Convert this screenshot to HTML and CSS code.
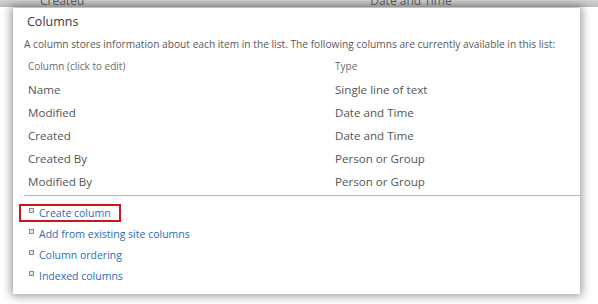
FILE: index.html
```html
<!DOCTYPE html>
<html lang="en">
<head>
    <meta charset="UTF-8">
    <title>Columns</title>
    <link rel="stylesheet" href="styles.css">
</head>
<body>
    <div class="backdrop">
        <span class="under-name">Created</span>
        <span class="under-type">Date and Time</span>
    </div>

    <div class="dialog">
        <h2 class="title">Columns</h2>
        <p class="desc">A column stores information about each item in the list. The following columns are currently available in this list:</p>

        <div class="columns">
            <div class="head">Column (click to edit)</div>
            <div class="head">Type</div>

            <div class="cell">Name</div>
            <div class="cell">Single line of text</div>

            <div class="cell">Modified</div>
            <div class="cell">Date and Time</div>

            <div class="cell">Created</div>
            <div class="cell">Date and Time</div>

            <div class="cell">Created By</div>
            <div class="cell">Person or Group</div>

            <div class="cell">Modified By</div>
            <div class="cell">Person or Group</div>
        </div>

        <ul class="links">
            <li><span class="link-item marked"><i class="bullet"></i><a href="#">Create column</a></span></li>
            <li><span class="link-item"><i class="bullet"></i><a href="#">Add from existing site columns</a></span></li>
            <li><span class="link-item"><i class="bullet"></i><a href="#">Column ordering</a></span></li>
            <li><span class="link-item"><i class="bullet"></i><a href="#">Indexed columns</a></span></li>
        </ul>
    </div>
</body>
</html>
```

FILE: styles.css
```css
:root {
    --text: #4a4a4a;
    --muted: #6a6a6a;
    --link: #2a6cb8;
    --line: #b5b5b5;
    --mark: #d0141c;
}

body {
    margin: 0;
    width: 598px;
    height: 304px;
    overflow: hidden;
    background: #fff;
    font-family: 'Open Sans', 'Noto Sans', sans-serif;
    color: var(--text);
}

.backdrop {
    height: 7px;
    overflow: hidden;
    display: flex;
    background: linear-gradient(to bottom, #d4d4d4, #bdbdbd);
    font-size: 12px;
    line-height: 14px;
    color: #555;
}

.backdrop span {
    margin-top: -6px;
}

.under-name {
    margin-left: 40px;
}

.under-type {
    margin-left: 286px;
}

.dialog {
    margin: 1px 0 0 13px;
    width: 567px;
    height: 286px;
    background: #fff;
    box-shadow: 0 0 9px 2px rgba(0, 0, 0, 0.4);
    padding: 0 0 0 11px;
    box-sizing: border-box;
}

.title {
    margin: 0;
    padding: 6px 0 0 3px;
    font-size: 12.5px;
    font-weight: 400;
    line-height: 16px;
    color: #3a3a3a;
}

.desc {
    margin: 6px 0 0;
    font-size: 10.2px;
    line-height: 16px;
    color: #5a5a5a;
    white-space: nowrap;
}

.columns {
    display: grid;
    grid-template-columns: 307px 1fr;
    margin-top: 6px;
    padding-bottom: 2px;
    border-bottom: 1px solid var(--line);
}

.head {
    padding-left: 4px;
    font-size: 10px;
    line-height: 16px;
    color: var(--muted);
    margin-bottom: 4px;
}

.cell {
    padding-left: 4px;
    font-size: 11.6px;
    line-height: 23px;
    color: #555;
}

.links {
    list-style: none;
    margin: 6px 0 0;
    padding: 0;
}

.links li {
    height: 21px;
    display: flex;
    align-items: center;
}

.link-item {
    display: inline-flex;
    align-items: center;
    gap: 5px;
    height: 18px;
    margin-left: -5px;
    padding: 0 10px 0 10px;
    box-sizing: border-box;
}

.link-item.marked {
    outline: 2px solid var(--mark);
    outline-offset: -2px;
}

.bullet {
    width: 3px;
    height: 3px;
    border: 1px solid #8c8c8c;
    background: #e4e4e4;
    position: relative;
    top: -2px;
}

.links a {
    font-size: 10.5px;
    color: var(--link);
    text-decoration: none;
}
```
